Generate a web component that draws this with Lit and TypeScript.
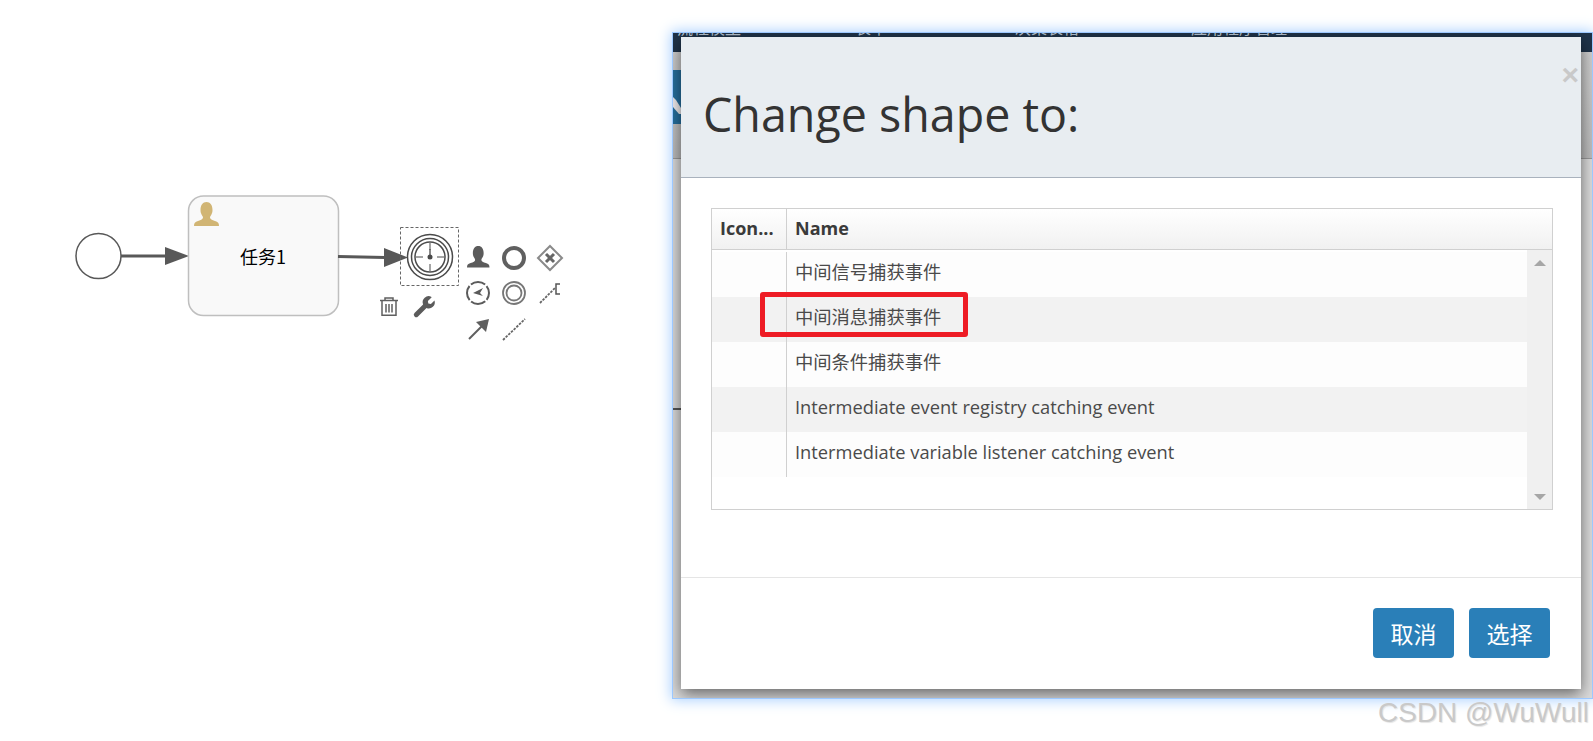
import { LitElement, html, css, svg } from "lit";
import { customElement } from "lit/decorators.js";

const person = (x: number, y: number, k: number, fill: string) => svg`
  <path transform="translate(${x} ${y}) scale(${k})" fill=${fill}
    d="M0 24c0-3 1-4 4-5 3-1 5-2 5-3.500 0-1-.6-1.700-1.200-2.600C7 11.500 6.500 10 6.500 8 6.500 3 8.800 0 12.500 0S18.500 3 18.500 8c0 2-.5 3.500-1.300 4.900-.6.900-1.200 1.600-1.200 2.600 0 1.500 2 2.500 5 3.500 3 1 4 2 4 5z"/>`;

@customElement("app-root")
export class AppRoot extends LitElement {
  static styles = css`
    :host {
      display: block;
      position: relative;
      width: 1593px;
      height: 741px;
      overflow: hidden;
      background: #fff;
      font-family: "Open Sans", "Noto Sans CJK SC", sans-serif;
    }
    .canvas {
      position: absolute;
      left: 0;
      top: 0;
    }
    .label {
      font: 18px "Noto Sans CJK SC", sans-serif;
      fill: #000;
    }
    .window {
      position: absolute;
      left: 673px;
      top: 33px;
      width: 919px;
      height: 665px;
      background: #ececec;
      box-shadow: 0 0 0 1px #9cc8ff, 0 0 13px 2px #a8d0ff;
      overflow: hidden;
      display: flex;
      flex-direction: column;
    }
    .nav {
      height: 19px;
      flex: none;
      background: #1f3349;
      display: flex;
      color: #b9c6d2;
      font-size: 16px;
      font-family: "Noto Sans CJK SC", sans-serif;
      overflow: hidden;
    }
    .nav span {
      display: block;
      height: 4px;
      overflow: hidden;
      line-height: 16px;
    }
    .nav b {
      display: block;
      font-weight: 400;
      margin-top: -14px;
      white-space: nowrap;
    }
    .nav .a { margin-left: 4px; width: 178px; }
    .nav .b { width: 160px; }
    .nav .c { width: 176px; }
    .band {
      height: 88px;
      flex: none;
      background: linear-gradient(#cfcfcf, #bcbcbc);
      border-bottom: 1px solid #9a9a9a;
      padding-top: 18px;
      box-sizing: content-box;
    }
    .blue {
      width: 8px;
      height: 54px;
      background: #26709f;
    }
    .blue svg {
      display: block;
    }
    .rest {
      flex: 1;
      position: relative;
      background: #dcdcdc;
    }
    .rule {
      height: 2px;
      width: 8px;
      margin-top: 249px;
      background: #555;
    }
    .modal {
      position: absolute;
      left: 8px;
      top: 4px;
      width: 900px;
      height: 652px;
      background: #fff;
      box-shadow: 0 5px 15px rgba(0, 0, 0, 0.55);
      display: flex;
      flex-direction: column;
      color: #333;
    }
    .head {
      flex: none;
      background: #e8edf1;
      border-bottom: 1px solid #a9b2bd;
      padding: 49px 22px 0;
      box-sizing: content-box;
      height: 91px;
      position: relative;
    }
    h1 {
      margin: 0;
      font: 400 46.600px/56px "Open Sans", sans-serif;
      color: #333;
    }
    .close {
      position: absolute;
      right: 2px;
      top: 18px;
      font: 700 30px/40px "Liberation Sans", sans-serif;
      color: #c9c9c9;
    }
    .body {
      height: 400px;
      flex: none;
      box-sizing: border-box;
      padding: 30px 28px 0 30px;
      border-bottom: 1px solid #e5e5e5;
    }
    .table {
      height: 302px;
      border: 1px solid #d0d0d0;
      box-sizing: border-box;
      display: flex;
      flex-direction: column;
    }
    .thead {
      height: 41px;
      flex: none;
      display: flex;
      box-sizing: border-box;
      background: linear-gradient(#fff, #f1f1f1);
      border-bottom: 1px solid #d0d0d0;
      font-weight: 700;
      font-size: 18px;
      line-height: 38px;
      color: #3a3a3a;
    }
    .c1 {
      width: 75px;
      flex: none;
      box-sizing: border-box;
      padding-left: 8px;
      border-right: 1px solid #d0d0d0;
      white-space: nowrap;
      overflow: hidden;
    }
    .c2 {
      flex: 1;
      padding-left: 8px;
      white-space: nowrap;
    }
    .tbody {
      flex: 1;
      display: flex;
      min-height: 0;
    }
    .rows {
      flex: 1;
      padding-top: 2px;
    }
    .row {
      height: 45px;
      display: flex;
      background: #fdfdfd;
      font-size: 18.300px;
      line-height: 39px;
      color: #4a4a4a;
    }
    .row.alt {
      background: #f2f2f2;
    }
    .scroll {
      width: 25px;
      flex: none;
      background: #f0f0f0;
      display: flex;
      flex-direction: column;
      justify-content: space-between;
      align-items: center;
      padding: 10px 0 9px;
      box-sizing: border-box;
    }
    .up, .down {
      width: 0;
      height: 0;
      border-left: 6px solid transparent;
      border-right: 6px solid transparent;
    }
    .up { border-bottom: 6px solid #a6a6a6; }
    .down { border-top: 6px solid #a6a6a6; }
    .foot {
      flex: 1;
      display: flex;
      justify-content: flex-end;
      gap: 15px;
      padding: 30px 31px 0 0;
      box-sizing: border-box;
    }
    button {
      width: 81px;
      height: 50px;
      padding: 0;
      border: 0;
      border-radius: 4px;
      background: #2a7fb8;
      color: #fff;
      font: 23px "Noto Sans CJK SC", sans-serif;
    }
    .mark {
      position: absolute;
      left: 760px;
      top: 292px;
      width: 208px;
      height: 45px;
      box-sizing: border-box;
      border: 5px solid #ee1c25;
      border-radius: 3px;
    }
    .wm {
      position: absolute;
      left: 1378px;
      top: 696px;
      font: 28px/34px "Liberation Sans", sans-serif;
      color: #c9c9c9;
      text-shadow: 1px 1px 1px #e4e4e4;
      white-space: nowrap;
    }
  `;

  private rows = [
    "中间信号捕获事件",
    "中间消息捕获事件",
    "中间条件捕获事件",
    "Intermediate event registry catching event",
    "Intermediate variable listener catching event",
  ];

  private diagram() {
    return html`<svg class="canvas" width="660" height="741" viewBox="0 0 660 741">
      <circle cx="98.500" cy="256" r="22.500" fill="#fff" stroke="#585858" stroke-width="1.500" />
      <path d="M121 256H166" stroke="#585858" stroke-width="3" />
      <path d="M165 247L189 256L165 265Z" fill="#585858" />
      <rect x="188.500" y="196" width="150" height="119.500" rx="15" fill="#f9f9f9" stroke="#bfbfbf" stroke-width="1.500" />
      ${person(194, 202, 1, "#d1b574")}
      <text class="label" x="240" y="264">任务1</text>
      <path d="M338 256.500L385 257.500" stroke="#585858" stroke-width="3" />
      <path d="M384 248L408 257.500L384 267Z" fill="#585858" />

      <rect x="400.500" y="227.500" width="58" height="58" fill="none" stroke="#666" stroke-width="1" stroke-dasharray="3 2" />
      <g fill="none" stroke="#4a4a4a">
        <circle cx="430" cy="257" r="22.500" stroke-width="1.500" />
        <circle cx="430" cy="257" r="18.500" stroke-width="1.500" />
        <circle cx="430" cy="257" r="15" stroke-width="1.500" />
        <path d="M430 243V250M430 264V271M416 257H423M437 257H444" stroke-width="1" />
        <path d="M430 249V257" stroke-width="1.300" />
      </g>
      <circle cx="430" cy="257" r="2.500" fill="#4a4a4a" />

      ${person(467, 246, 0.9, "#5b5b5b")}
      <circle cx="514" cy="258" r="10" fill="none" stroke="#606060" stroke-width="4" />
      <path d="M550 246L562 258L550 270L538 258Z" fill="none" stroke="#8a8a8a" stroke-width="2" />
      <path d="M546 254L554 262M554 254L546 262" stroke="#666" stroke-width="3" />

      <circle cx="478" cy="293" r="11" fill="none" stroke="#5b5b5b" stroke-width="2" stroke-dasharray="15.300 2" stroke-dashoffset="8" />
      <path d="M473 293L483 288L480 293L483 296Z" fill="#5b5b5b" />
      <circle cx="514" cy="293" r="11" fill="none" stroke="#777" stroke-width="1.800" />
      <circle cx="514" cy="293" r="7.500" fill="none" stroke="#777" stroke-width="1.800" />
      <path d="M540 303L555 288" stroke="#666" stroke-width="1.800" stroke-dasharray="2.500 1.200" fill="none" />
      <path d="M560 284H556V294H560" stroke="#555" stroke-width="1.500" fill="none" />

      <path d="M469 339L483 325" stroke="#5f5f5f" stroke-width="2" />
      <path d="M489 319L486 332L476 322Z" fill="#5f5f5f" />
      <path d="M503 340L525 319" stroke="#666" stroke-width="1.800" stroke-dasharray="2.500 1.200" fill="none" />

      <g fill="none" stroke="#5f5f5f" stroke-width="1.500">
        <path d="M380 300.500H398M385 300V298H393V300" />
        <path d="M382 301V315.200H396V301" />
        <path d="M386 304V312.500M389 304V312.500M392 304V312.500" />
      </g>
      <path fill="#5b5b5b" transform="translate(-2 0)"
        d="M433.500 297.500l-3.600 3.400.4 2.600 2.600.6 3.600-3.500a6 6 0 0 1-8 7.400l-8.500 8.400a2.400 2.400 0 0 1-3.500-3.400l8.600-8.600a6 6 0 0 1 8.400-7.500z" />
    </svg>`;
  }

  render() {
    return html`
      ${this.diagram()}
      <div class="window">
        <div class="nav">
          <span class="a"><b>流程模型</b></span>
          <span class="b"><b>表单</b></span>
          <span class="c"><b>决策表格</b></span>
          <span><b>应用程序管理</b></span>
        </div>
        <div class="band">
          <div class="blue">
            <svg width="8" height="54" viewBox="0 0 8 54">
              <path d="M0 27L3 30L8 38V44H6L0 37Z" fill="#f1eef0" />
            </svg>
          </div>
        </div>
        <div class="rest"><div class="rule"></div></div>
        <div class="modal">
          <div class="head">
            <h1>Change shape to:</h1>
            <div class="close">×</div>
          </div>
          <div class="body">
            <div class="table">
              <div class="thead">
                <div class="c1">Icon...</div>
                <div class="c2">Name</div>
              </div>
              <div class="tbody">
                <div class="rows">
                  ${this.rows.map(
                    (r, i) => html`<div class="row ${i % 2 ? "alt" : ""}">
                      <div class="c1"></div>
                      <div class="c2">${r}</div>
                    </div>`
                  )}
                </div>
                <div class="scroll"><div class="up"></div><div class="down"></div></div>
              </div>
            </div>
          </div>
          <div class="foot">
            <button>取消</button>
            <button>选择</button>
          </div>
        </div>
      </div>
      <div class="mark"></div>
      <div class="wm">CSDN @WuWull</div>
    `;
  }
}
